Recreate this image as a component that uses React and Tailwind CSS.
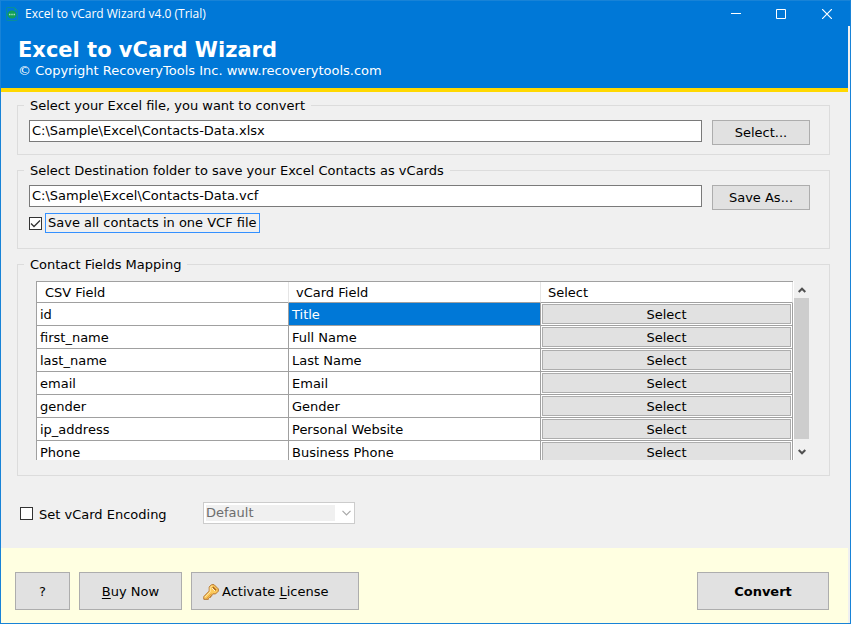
import { useRef, useState } from 'react';

const MAPPINGS = [
  { csv: 'id', vcard: 'Title' },
  { csv: 'first_name', vcard: 'Full Name' },
  { csv: 'last_name', vcard: 'Last Name' },
  { csv: 'email', vcard: 'Email' },
  { csv: 'gender', vcard: 'Gender' },
  { csv: 'ip_address', vcard: 'Personal Website' },
  { csv: 'Phone', vcard: 'Business Phone' },
];

const BUTTON = 'border border-[#adadad] bg-[#e1e1e1] hover:border-[#0078d7] hover:bg-[#e5f1fb]';
const HEAD_CELL = 'border-r border-b border-r-[#e5e5e5] border-b-[#a0a0a0] p-0 pt-[2px] font-normal leading-[18px]';
const CELL = 'border-r border-b border-[#a0a0a0] p-0 pt-[2px] pl-[3px] leading-5';

function AppIcon() {
  return (
    <svg width="12" height="14" viewBox="0 0 12 14" aria-hidden="true">
      <path d="M1.500 .5h7L11.500 3.500v9a1 1 0 0 1-1 1h-9a1 1 0 0 1-1-1v-11a1 1 0 0 1 1-1Z" fill="none" stroke="#0a8f98" />
      <path d="M8.500 .5 11.500 3.500h-3Z" fill="#0b9a8c" />
      <ellipse cx="6" cy="7.500" rx="4.500" ry="4" fill="#12a055" />
      <path d="M3 7.500h1.500M5.300 7.500h1.400M7.500 7.500H9" stroke="#a5e0c2" strokeWidth="1.600" />
    </svg>
  );
}

function KeyIcon() {
  return (
    <svg width="16" height="16" viewBox="0 0 16 16" aria-hidden="true">
      <path
        d="M8.500.7h2.600l4.200 4.200v2.300L12.600 9.900H9.800l-1 1v1.200H7.500v1.300H6.200l-.8.800v1.100H.8v-2.700l5.400-5.500V3Z"
        fill="#fbc95c"
        stroke="#b5742f"
        strokeLinejoin="round"
      />
      <path d="M1.800 13.300 7.200 7.800V3.500L9 1.700" fill="none" stroke="#ffe9a6" />
      <path d="m9.800 3 3.200 3.200" stroke="#a8641f" strokeWidth="1.600" />
      <path d="m9 4 3 3" stroke="#fff4cc" />
      <path d="m8.500 9.500-5.300 5.300" stroke="#e8a13c" />
    </svg>
  );
}

function TitleBar() {
  return (
    <div className="flex h-[25px] items-center bg-[#0078d7] pl-[5px] font-['Open_Sans',sans-serif] text-[12px] text-white">
      <AppIcon />
      <span className="ml-[7px] flex-1">Excel to vCard Wizard v4.0 (Trial)</span>
      <button type="button" aria-label="Minimize" className="flex h-full w-[45px] items-center justify-center">
        <svg width="10" height="11" viewBox="0 0 10 11"><path d="M0 5.500h10" stroke="#fff" /></svg>
      </button>
      <button type="button" aria-label="Maximize" className="flex h-full w-[45px] items-center justify-center">
        <svg width="10" height="10" viewBox="0 0 10 10"><path d="M.5.5h9v9h-9Z" fill="none" stroke="#fff" /></svg>
      </button>
      <button type="button" aria-label="Close" className="flex h-full w-[47px] items-center justify-center">
        <svg width="10" height="10" viewBox="0 0 10 10"><path d="m0 0 10 10M10 0 0 10" stroke="#fff" strokeWidth="1.200" /></svg>
      </button>
    </div>
  );
}

function Group({ title, className, children }) {
  return (
    <fieldset className="min-w-0 border border-[#dcdcdc] pl-[6px]">
      <legend className="h-4 px-[6px] leading-[18px]">{title}</legend>
      <div className={className}>{children}</div>
    </fieldset>
  );
}

function FileRow({ label, value, onChange, button }) {
  return (
    <div className="flex items-start gap-[10px]">
      <input
        type="text"
        aria-label={label}
        value={value}
        onChange={(e) => onChange(e.target.value)}
        className="h-[22px] min-w-0 flex-1 border border-[#7a7a7a] bg-white px-[2px] pb-[2px] outline-none"
      />
      <button type="button" className={`h-[25px] w-[98px] ${BUTTON}`}>{button}</button>
    </div>
  );
}

function CheckBox({ id, checked, onChange }) {
  return (
    <span className="relative h-[13px] w-[13px]">
      <input
        id={id}
        type="checkbox"
        checked={checked}
        onChange={(e) => onChange(e.target.checked)}
        className="block h-[13px] w-[13px] appearance-none border border-[#333] bg-white outline-none"
      />
      {checked && (
        <svg className="pointer-events-none absolute inset-0" width="13" height="13" viewBox="0 0 13 13">
          <path d="m2 6.500 3 3 6-6" fill="none" stroke="#333" strokeWidth="1.300" />
        </svg>
      )}
    </span>
  );
}

function MappingTable() {
  const [selected, setSelected] = useState(0);
  const viewRef = useRef(null);

  const scroll = (dy) => viewRef.current.scrollBy({ top: dy });

  return (
    <div className="flex h-[179px]">
      <div ref={viewRef} className="min-w-0 flex-1 overflow-hidden border-r border-white">
        <table className="w-full table-fixed border-separate border-spacing-0 border-t border-l border-[#a0a0a0] bg-white text-left">
          <thead>
            <tr className="h-[21px]">
              <th className={`pl-2 ${HEAD_CELL}`}>CSV Field</th>
              <th className={`pl-[7px] ${HEAD_CELL}`}>vCard Field</th>
              <th className={`pl-[7px] ${HEAD_CELL}`}>Select</th>
            </tr>
          </thead>
          <tbody>
            {MAPPINGS.map((row, i) => (
              <tr key={row.csv} onClick={() => setSelected(i)}>
                <td className={CELL}>{row.csv}</td>
                <td className={`${CELL} ${i === selected ? 'bg-[#0078d7] text-white' : ''}`}>{row.vcard}</td>
                <td className="border-r border-b border-[#a0a0a0] p-px">
                  <button type="button" className={`block h-5 w-full pt-[2px] leading-4 ${BUTTON}`}>Select</button>
                </td>
              </tr>
            ))}
          </tbody>
        </table>
      </div>

      {/* Scrollbar */}
      <div className="flex w-[15px] flex-col">
        <button type="button" aria-label="Scroll up" onClick={() => scroll(-23)} className="flex h-[17px] items-center justify-center">
          <svg width="8" height="6" viewBox="0 0 8 6"><path d="m.7 5 3.300-3.300L7.300 5" fill="none" stroke="#505050" strokeWidth="2" /></svg>
        </button>
        <div className="flex-1 bg-[#cdcdcd]" />
        <button type="button" aria-label="Scroll down" onClick={() => scroll(23)} className="flex h-[21px] items-center justify-center pt-1">
          <svg width="8" height="6" viewBox="0 0 8 6"><path d="m.7 1 3.300 3.300L7.300 1" fill="none" stroke="#505050" strokeWidth="2" /></svg>
        </button>
      </div>
    </div>
  );
}

export default function App() {
  const [source, setSource] = useState('C:\\Sample\\Excel\\Contacts-Data.xlsx');
  const [target, setTarget] = useState('C:\\Sample\\Excel\\Contacts-Data.vcf');
  const [single, setSingle] = useState(true);
  const [encoding, setEncoding] = useState(false);

  return (
    <div className="flex min-h-screen flex-col border border-[#1883d7] bg-[#f0f0f0] font-['DejaVu_Sans',Verdana,sans-serif] text-[13px] leading-4 text-black">
      <TitleBar />

      <div className="flex flex-1 flex-col pr-[2px]">
        <header className="h-[66px] border-b-4 border-[#ffd800] bg-[#0078d7] pt-[11px] pl-[17px] text-white">
          <h1 className="text-[21px] leading-[26px] font-bold">Excel to vCard Wizard</h1>
          <p>© Copyright RecoveryTools Inc. www.recoverytools.com</p>
        </header>

        <main className="flex flex-1 flex-col gap-[7px] pt-[5px] pr-[18px] pl-4">
          <Group title="Select your Excel file, you want to convert" className="pt-[7px] pr-[19px] pb-[9px] pl-[5px]">
            <FileRow label="Excel file" value={source} onChange={setSource} button="Select..." />
          </Group>

          <Group title="Select Destination folder to save your Excel Contacts as vCards" className="pt-[7px] pr-[19px] pb-[15px] pl-[5px]">
            <FileRow label="Destination folder" value={target} onChange={setTarget} button="Save As..." />
            <div className="mt-[3px] flex items-center gap-[3px]">
              <CheckBox id="single" checked={single} onChange={setSingle} />
              <label htmlFor="single" className="border border-[#3390ff] px-[2px] leading-[18px]">
                Save all contacts in one VCF file
              </label>
            </div>
          </Group>

          <Group title="Contact Fields Mapping" className="pt-[9px] pr-5 pb-[15px] pl-3">
            <MappingTable />
          </Group>

          <div className="mt-[19px] mb-6 flex items-center pl-[3px]">
            <CheckBox id="encoding" checked={encoding} onChange={setEncoding} />
            <label htmlFor="encoding" className="w-[170px] pt-[3px] pl-[6px]">Set vCard Encoding</label>
            <div className="flex h-[22px] w-[152px] items-center border border-[#cccccc] bg-white pr-[3px] pl-[2px]">
              <select
                aria-label="vCard encoding"
                disabled={!encoding}
                className="h-4 min-w-0 flex-1 appearance-none bg-[#f0f0f0] leading-4 text-[#6d6d6d] outline-none"
              >
                <option>Default</option>
                <option>UTF-8</option>
              </select>
              <svg className="ml-[7px]" width="9" height="6" viewBox="0 0 9 6" aria-hidden="true">
                <path d="m.5.8 4 4 4-4" fill="none" stroke="#a8a8a8" strokeWidth="1.200" />
              </svg>
            </div>
          </div>
        </main>

        <footer className="flex items-center gap-[9px] bg-[#ffffe1] pt-6 pr-[19px] pb-[13px] pl-[14px]">
          <button type="button" className={`h-[38px] w-[55px] pt-px ${BUTTON}`}>?</button>
          <button type="button" className={`h-[38px] w-[103px] pt-px ${BUTTON}`}>
            <span className="underline underline-offset-2">B</span>uy Now
          </button>
          <button type="button" className={`flex h-[38px] w-[168px] items-center gap-[3px] pt-px pl-[11px] ${BUTTON}`}>
            <KeyIcon />
            <span>Activate <span className="underline underline-offset-2">L</span>icense</span>
          </button>
          <button type="button" className={`ml-auto h-[38px] w-[132px] pt-px font-bold ${BUTTON}`}>Convert</button>
        </footer>
      </div>
    </div>
  );
}
